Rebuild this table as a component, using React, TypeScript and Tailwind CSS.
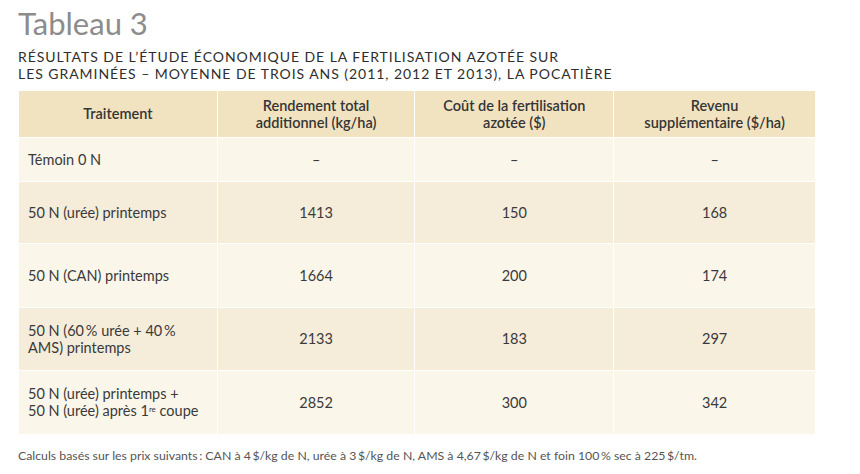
const rows: { label: React.ReactNode; values: string[]; dark: boolean; h: string }[] = [
  { label: "Témoin 0 N", values: ["–", "–", "–"], dark: false, h: "h-[44px]" },
  { label: "50 N (urée) printemps", values: ["1413", "150", "168"], dark: true, h: "h-[62px]" },
  { label: "50 N (CAN) printemps", values: ["1664", "200", "174"], dark: false, h: "h-[64px]" },
  {
    label: (
      <>
        50 N (60{"\u2009"}% urée + 40{"\u2009"}%
        <br />
        AMS) printemps
      </>
    ),
    values: ["2133", "183", "297"],
    dark: true,
    h: "h-[63px]",
  },
  {
    label: (
      <>
        50 N (urée) printemps +
        <br />
        50 N (urée) après 1<sup className="text-[8px]">re</sup> coupe
      </>
    ),
    values: ["2852", "300", "342"],
    dark: false,
    h: "h-[64px]",
  },
];

const headers = [
  "Traitement",
  <>Rendement total<br />additionnel (kg/ha)</>,
  <>Coût de la fertilisation<br />azotée ($)</>,
  <>Revenu<br />supplémentaire ($/ha)</>,
];

const widths = ["w-[199px]", "w-[198px]", "w-[199px]", "w-[202px]"];

export default function App() {
  return (
    <div className="h-[474px] w-[860px] bg-white pl-[18px] pt-[6px] font-['Lato',sans-serif] text-[#3a3a3a]">
      <h1 className="text-[31px] leading-[34px] text-[#8c8c8c]">Tableau 3</h1>

      <h2 className="mt-[8px] text-[14px] leading-[17px] tracking-[0.95px] text-[#2e2e2e]">
        RÉSULTATS DE L’ÉTUDE ÉCONOMIQUE DE LA FERTILISATION AZOTÉE SUR
        <br />
        LES GRAMINÉES – MOYENNE DE TROIS ANS (2011, 2012 ET 2013), LA POCATIÈRE
      </h2>

      <table className="mt-[9px] w-[798px] border-collapse text-[14.5px] leading-[17px]">
        <thead>
          <tr className="h-[46px] bg-[#f2e3c0]">
            {headers.map((h, i) => (
              <th
                key={i}
                className={`${widths[i]} border-x border-white px-2 text-center font-semibold text-[#353535]`}
              >
                {h}
              </th>
            ))}
          </tr>
        </thead>
        <tbody>
          {rows.map((r, i) => (
            <tr key={i} className={`${r.h} ${r.dark ? "bg-[#f5ecda]" : "bg-[#fbf6ea]"}`}>
              <td className="border border-white pl-[9px] text-left">{r.label}</td>
              {r.values.map((v, j) => (
                <td key={j} className="border border-white text-center">
                  {v}
                </td>
              ))}
            </tr>
          ))}
        </tbody>
      </table>

      <p className="mt-[12px] text-[12.3px] text-[#555]">
        Calculs basés sur les prix suivants{"\u2009"}: CAN à 4{"\u2009"}$/kg de N, urée à 3{"\u2009"}$/kg de N, AMS à
        4,67{"\u2009"}$/kg de N et foin 100{"\u2009"}% sec à 225{"\u2009"}$/tm.
      </p>
    </div>
  );
}
